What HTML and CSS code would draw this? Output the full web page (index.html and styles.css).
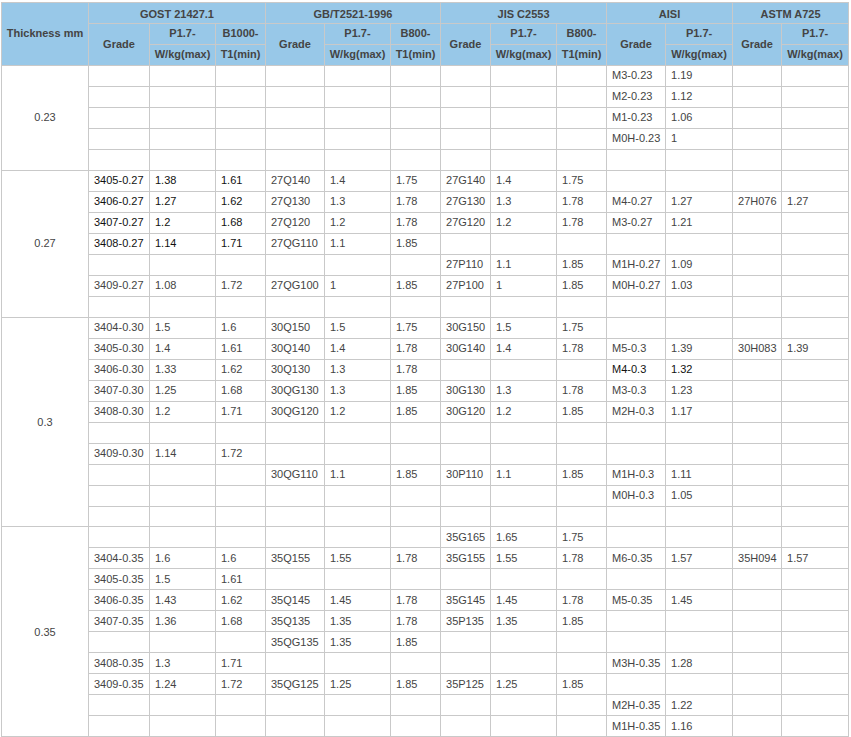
FILE: index.html
```html
<!DOCTYPE html>
<html lang="en">
<head>
<meta charset="utf-8">
<title>Electrical steel grade comparison</title>
<link rel="stylesheet" href="styles.css">
</head>
<body>
<table class="grades">
<colgroup>
<col class="c87"><col class="c61"><col class="c66"><col class="c50"><col class="c59"><col class="c66"><col class="c50"><col class="c50"><col class="c66"><col class="c50"><col class="c59"><col class="c67"><col class="c49"><col class="c67">
</colgroup>
<thead>
<tr class="top"><th rowspan="3" class="lift">Thickness mm</th><th colspan="3">GOST 21427.1</th><th colspan="3">GB/T2521-1996</th><th colspan="3">JIS C2553</th><th colspan="2">AISI</th><th colspan="2">ASTM A725</th></tr>
<tr><th rowspan="2" class="lift">Grade</th><th class="lift">P1.7-</th><th class="lift">B1000-</th><th rowspan="2" class="lift">Grade</th><th class="lift">P1.7-</th><th class="lift">B800-</th><th rowspan="2" class="lift">Grade</th><th class="lift">P1.7-</th><th class="lift">B800-</th><th rowspan="2" class="lift">Grade</th><th class="lift">P1.7-</th><th rowspan="2" class="lift">Grade</th><th class="lift">P1.7-</th></tr>
<tr><th class="lift">W/kg(max)</th><th class="lift">T1(min)</th><th class="lift">W/kg(max)</th><th class="lift">T1(min)</th><th class="lift">W/kg(max)</th><th class="lift">T1(min)</th><th class="lift">W/kg(max)</th><th class="lift">W/kg(max)</th></tr>
</thead>
<tbody>
<tr><td rowspan="5" class="thick">0.23</td><td></td><td></td><td></td><td></td><td></td><td></td><td></td><td></td><td></td><td>M3-0.23</td><td>1.19</td><td></td><td></td></tr>
<tr><td></td><td></td><td></td><td></td><td></td><td></td><td></td><td></td><td></td><td>M2-0.23</td><td>1.12</td><td></td><td></td></tr>
<tr><td></td><td></td><td></td><td></td><td></td><td></td><td></td><td></td><td></td><td>M1-0.23</td><td>1.06</td><td></td><td></td></tr>
<tr><td></td><td></td><td></td><td></td><td></td><td></td><td></td><td></td><td></td><td>M0H-0.23</td><td>1</td><td></td><td></td></tr>
<tr><td></td><td></td><td></td><td></td><td></td><td></td><td></td><td></td><td></td><td></td><td></td><td></td><td></td></tr>
</tbody>
<tbody>
<tr><td rowspan="7" class="thick">0.27</td><td class="ink">3405-0.27</td><td class="ink">1.38</td><td class="ink">1.61</td><td>27Q140</td><td>1.4</td><td>1.75</td><td>27G140</td><td>1.4</td><td>1.75</td><td></td><td></td><td></td><td></td></tr>
<tr><td class="ink">3406-0.27</td><td class="ink">1.27</td><td class="ink">1.62</td><td>27Q130</td><td>1.3</td><td>1.78</td><td>27G130</td><td>1.3</td><td>1.78</td><td>M4-0.27</td><td>1.27</td><td>27H076</td><td>1.27</td></tr>
<tr><td class="ink">3407-0.27</td><td class="ink">1.2</td><td class="ink">1.68</td><td>27Q120</td><td>1.2</td><td>1.78</td><td>27G120</td><td>1.2</td><td>1.78</td><td>M3-0.27</td><td>1.21</td><td></td><td></td></tr>
<tr><td class="ink">3408-0.27</td><td class="ink">1.14</td><td class="ink">1.71</td><td>27QG110</td><td>1.1</td><td>1.85</td><td></td><td></td><td></td><td></td><td></td><td></td><td></td></tr>
<tr><td></td><td></td><td></td><td></td><td></td><td></td><td>27P110</td><td>1.1</td><td>1.85</td><td>M1H-0.27</td><td>1.09</td><td></td><td></td></tr>
<tr><td>3409-0.27</td><td>1.08</td><td>1.72</td><td>27QG100</td><td>1</td><td>1.85</td><td>27P100</td><td>1</td><td>1.85</td><td>M0H-0.27</td><td>1.03</td><td></td><td></td></tr>
<tr><td></td><td></td><td></td><td></td><td></td><td></td><td></td><td></td><td></td><td></td><td></td><td></td><td></td></tr>
</tbody>
<tbody>
<tr><td rowspan="10" class="thick drop">0.3</td><td>3404-0.30</td><td>1.5</td><td>1.6</td><td>30Q150</td><td>1.5</td><td>1.75</td><td>30G150</td><td>1.5</td><td>1.75</td><td></td><td></td><td></td><td></td></tr>
<tr><td>3405-0.30</td><td>1.4</td><td>1.61</td><td>30Q140</td><td>1.4</td><td>1.78</td><td>30G140</td><td>1.4</td><td>1.78</td><td>M5-0.3</td><td>1.39</td><td>30H083</td><td>1.39</td></tr>
<tr><td>3406-0.30</td><td>1.33</td><td>1.62</td><td>30Q130</td><td>1.3</td><td>1.78</td><td></td><td></td><td></td><td class="ink">M4-0.3</td><td class="ink">1.32</td><td></td><td></td></tr>
<tr><td>3407-0.30</td><td>1.25</td><td>1.68</td><td>30QG130</td><td>1.3</td><td>1.85</td><td>30G130</td><td>1.3</td><td>1.78</td><td>M3-0.3</td><td>1.23</td><td></td><td></td></tr>
<tr><td>3408-0.30</td><td>1.2</td><td>1.71</td><td>30QG120</td><td>1.2</td><td>1.85</td><td>30G120</td><td>1.2</td><td>1.85</td><td>M2H-0.3</td><td>1.17</td><td></td><td></td></tr>
<tr><td></td><td></td><td></td><td></td><td></td><td></td><td></td><td></td><td></td><td></td><td></td><td></td><td></td></tr>
<tr><td>3409-0.30</td><td>1.14</td><td>1.72</td><td></td><td></td><td></td><td></td><td></td><td></td><td></td><td></td><td></td><td></td></tr>
<tr><td></td><td></td><td></td><td>30QG110</td><td>1.1</td><td>1.85</td><td>30P110</td><td>1.1</td><td>1.85</td><td>M1H-0.3</td><td>1.11</td><td></td><td></td></tr>
<tr><td></td><td></td><td></td><td></td><td></td><td></td><td></td><td></td><td></td><td>M0H-0.3</td><td>1.05</td><td></td><td></td></tr>
<tr class="short"><td></td><td></td><td></td><td></td><td></td><td></td><td></td><td></td><td></td><td></td><td></td><td></td><td></td></tr>
</tbody>
<tbody class="low">
<tr><td rowspan="10" class="thick">0.35</td><td></td><td></td><td></td><td></td><td></td><td></td><td>35G165</td><td>1.65</td><td>1.75</td><td></td><td></td><td></td><td></td></tr>
<tr><td>3404-0.35</td><td>1.6</td><td>1.6</td><td>35Q155</td><td>1.55</td><td>1.78</td><td>35G155</td><td>1.55</td><td>1.78</td><td>M6-0.35</td><td>1.57</td><td>35H094</td><td>1.57</td></tr>
<tr><td>3405-0.35</td><td>1.5</td><td>1.61</td><td></td><td></td><td></td><td></td><td></td><td></td><td></td><td></td><td></td><td></td></tr>
<tr><td>3406-0.35</td><td>1.43</td><td>1.62</td><td>35Q145</td><td>1.45</td><td>1.78</td><td>35G145</td><td>1.45</td><td>1.78</td><td>M5-0.35</td><td>1.45</td><td></td><td></td></tr>
<tr><td>3407-0.35</td><td>1.36</td><td>1.68</td><td>35Q135</td><td>1.35</td><td>1.78</td><td>35P135</td><td>1.35</td><td>1.85</td><td></td><td></td><td></td><td></td></tr>
<tr><td></td><td></td><td></td><td>35QG135</td><td>1.35</td><td>1.85</td><td></td><td></td><td></td><td></td><td></td><td></td><td></td></tr>
<tr><td>3408-0.35</td><td>1.3</td><td>1.71</td><td></td><td></td><td></td><td></td><td></td><td></td><td>M3H-0.35</td><td>1.28</td><td></td><td></td></tr>
<tr><td>3409-0.35</td><td>1.24</td><td>1.72</td><td>35QG125</td><td>1.25</td><td>1.85</td><td>35P125</td><td>1.25</td><td>1.85</td><td></td><td></td><td></td><td></td></tr>
<tr><td></td><td></td><td></td><td></td><td></td><td></td><td></td><td></td><td></td><td>M2H-0.35</td><td>1.22</td><td></td><td></td></tr>
<tr><td></td><td></td><td></td><td></td><td></td><td></td><td></td><td></td><td></td><td>M1H-0.35</td><td>1.16</td><td></td><td></td></tr>
</tbody>
</table>
</body>
</html>
```

FILE: styles.css
```css
html, body {
  margin: 0;
  padding: 0;
  background: #fff;
  overflow: hidden;
}
body {
  padding: 2px 0 0 1px;
}
.grades {
  border-collapse: collapse;
  table-layout: fixed;
  width: 847px;
  font-family: "Liberation Sans", Arial, sans-serif;
  font-size: 11px;
  color: #444;
}
.c87 { width: 87px; }
.c61 { width: 61px; }
.c66 { width: 66px; }
.c50 { width: 50px; }
.c59 { width: 59px; }
.c67 { width: 67px; }
.c49 { width: 49px; }
.grades tr { height: 21px; }
.grades tr.short { height: 20px; }
.grades th,
.grades td {
  border: 1px solid #c9c9c9;
  padding: 0;
  line-height: 14px;
  overflow: hidden;
  white-space: nowrap;
}
.grades th {
  background: #98c8e8;
  font-weight: bold;
  text-align: center;
  color: #444;
  padding-top: 1px;
}
.grades th.lift {
  padding-top: 0;
  padding-bottom: 2px;
}
.grades td {
  text-align: left;
  padding: 0 0 2px 5px;
}
.grades .low td {
  padding-bottom: 0;
}
.grades td.thick {
  text-align: center;
  padding-left: 0;
}
.grades td.thick.drop {
  padding-bottom: 0;
}
.grades td.ink {
  color: #111;
}
```
